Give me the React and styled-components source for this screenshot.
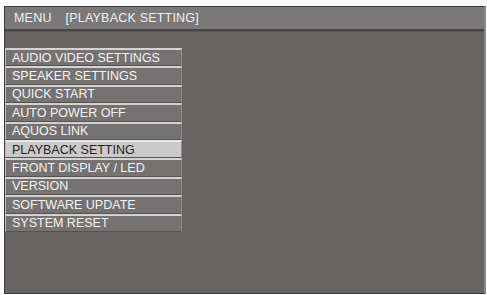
import React from 'react'
import styled, { createGlobalStyle } from 'styled-components'

const Global = createGlobalStyle`
  body {
    margin: 0;
    background: #fdfdfd;
    font-family: "Liberation Sans", Arial, sans-serif;
  }
`;

const Screen = styled.div`
  margin: 6px 0 0 4px;
  width: 482px;
  height: 288px;
  box-sizing: border-box;
  background: #686464;
  border: 1px solid #3e3c3c;
  border-right: 2px solid #8a8888;
  display: flex;
  flex-direction: column;
`;

const Header = styled.div`
  height: 22px;
  background: #7a7878;
  border-bottom: 2px solid #474545;
  display: flex;
  align-items: center;
  gap: 14px;
  padding-left: 9px;
  color: #f2f2f2;
  font-size: 12.5px;
  letter-spacing: 0.2px;
`;

const Body = styled.div`
  flex: 1;
  padding-top: 16px;
  border-top: 1px solid #5a5656;
`;

const Menu = styled.div`
  width: 177px;
  display: flex;
  flex-direction: column;
`;

const Item = styled.div`
  height: 18.4px;
  box-sizing: border-box;
  display: flex;
  align-items: center;
  padding-left: 6px;
  font-size: 12.5px;
  border-top: 2px solid ${(props) => props.selected ? "#e6e6e6" : "#d4d2d2"};
  border-left: 1px solid #bdbbbb;
  border-right: 1px solid #8e8c8c;
  border-bottom: 1px solid #555252;
  background: ${(props) => props.selected ? "#cbcaca" : "#757272"};
  color: ${(props) => props.selected ? "#1e1e1e" : "#f4f4f4"};
`;

const items = [
  "AUDIO VIDEO SETTINGS",
  "SPEAKER SETTINGS",
  "QUICK START",
  "AUTO POWER OFF",
  "AQUOS LINK",
  "PLAYBACK SETTING",
  "FRONT DISPLAY / LED",
  "VERSION",
  "SOFTWARE UPDATE",
  "SYSTEM RESET",
];

const App = () => {
  return (
    <>
      <Global />
      <Screen>
        <Header>
          <span>MENU</span>
          <span>[PLAYBACK SETTING]</span>
        </Header>
        <Body>
          <Menu>
            {items.map((label) => (
              <Item key={label} selected={label === "PLAYBACK SETTING"}>{label}</Item>
            ))}
          </Menu>
        </Body>
      </Screen>
    </>
  )
}

export default App
